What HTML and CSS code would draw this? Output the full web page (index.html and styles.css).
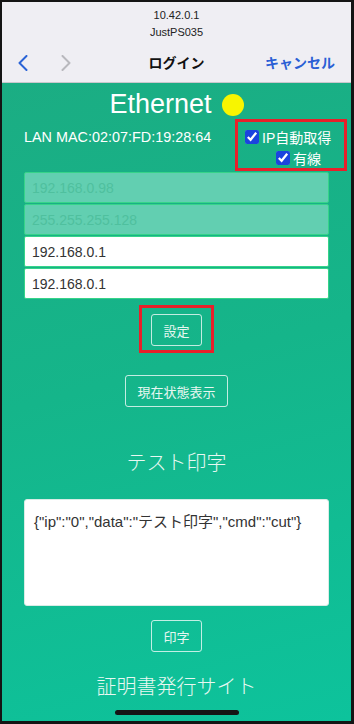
FILE: index.html
```html
<!DOCTYPE html>
<html>
<head>
<meta charset="utf-8">
<link rel="stylesheet" href="styles.css">
</head>
<body>

<div class="phone">
    <header class="browser-bar">
        <div class="site">
            <div>10.42.0.1</div>
            <div>JustPS035</div>
        </div>
        <nav class="nav">
            <div class="nav-arrows">
                <svg class="back" width="10" height="16" viewBox="0 0 10 16"><path d="M8.5 1 L1.5 8 L8.5 15" fill="none" stroke="#2a63d6" stroke-width="2" stroke-linecap="round" stroke-linejoin="round"/></svg>
                <svg class="fwd" width="10" height="16" viewBox="0 0 10 16"><path d="M1.5 1 L8.5 8 L1.5 15" fill="none" stroke="#b8b8bd" stroke-width="2" stroke-linecap="round" stroke-linejoin="round"/></svg>
            </div>
            <span class="nav-title">ログイン</span>
            <span class="nav-cancel">キャンセル</span>
        </nav>
    </header>

    <main class="page">
        <h1 class="title">Ethernet <span class="status-dot"></span></h1>

        <div class="mac-row">
            <div class="mac">LAN MAC:02:07:FD:19:28:64</div>
            <div class="checks mark">
                <label class="check"><input type="checkbox" checked>IP自動取得</label>
                <label class="check wired"><input type="checkbox" checked>有線</label>
            </div>
        </div>

        <div class="fields">
            <input class="field" type="text" value="192.168.0.98" disabled>
            <input class="field" type="text" value="255.255.255.128" disabled>
            <input class="field" type="text" value="192.168.0.1">
            <input class="field" type="text" value="192.168.0.1">
        </div>

        <div class="mark set-mark">
            <button class="btn">設定</button>
        </div>

        <button class="btn status-btn">現在状態表示</button>

        <h2 class="section test-title">テスト印字</h2>

        <textarea class="payload">{"ip":"0","data":"テスト印字","cmd":"cut"}</textarea>

        <button class="btn print-btn">印字</button>

        <h2 class="section cert-title">証明書発行サイト</h2>
    </main>

    <div class="home-bar"></div>
</div>

</body>
</html>
```

FILE: styles.css
```css
* {
    box-sizing: border-box;
}

body {
    margin: 0;
    background: #111;
    font-family: "Liberation Sans", "Noto Sans CJK JP", sans-serif;
}

.phone {
    position: relative;
    width: 354px;
    height: 724px;
    border: solid #141414;
    border-width: 2px 3px 3px 2px;
    overflow: hidden;
    display: flex;
    flex-direction: column;
    background: #efeef3;
}

/* browser chrome */
.browser-bar {
    background: #efeef3;
    border-bottom: 1px solid #c9c8cd;
    height: 81px;
    flex: none;
}

.site {
    padding-top: 5px;
    height: 40px;
    text-align: center;
    font-size: 11px;
    line-height: 17px;
    color: #222;
}

.nav {
    display: grid;
    grid-template-columns: 1fr auto 1fr;
    align-items: center;
    height: 40px;
    padding: 0 16px;
}

.nav-arrows {
    display: flex;
    gap: 33px;
    align-items: center;
    padding-top: 2px;
}

.nav-arrows svg {
    display: block;
}

.nav-title {
    font-size: 14px;
    font-weight: bold;
    color: #111;
}

.nav-cancel {
    justify-self: end;
    font-size: 14px;
    font-weight: bold;
    color: #2a5fd5;
}

/* page */
.page {
    flex: 1;
    display: flex;
    flex-direction: column;
    align-items: center;
    padding: 6px 22px 0;
    background: linear-gradient(165deg, #1bad83 0%, #15b58a 45%, #0dc39c 100%);
    color: #fff;
}

.title {
    margin: 0;
    height: 30px;
    line-height: 30px;
    font-size: 27px;
    font-weight: normal;
    display: flex;
    align-items: center;
    gap: 10px;
}

.status-dot {
    width: 22px;
    height: 22px;
    border-radius: 50%;
    background: #f8f500;
    margin-top: 2px;
}

.mac-row {
    width: 100%;
    display: flex;
    justify-content: space-between;
    align-items: flex-start;
}

.mac {
    font-size: 14.4px;
    line-height: 20px;
    padding-top: 8px;
}

.mark {
    border: 3px solid #e8202a;
}

.checks {
    width: 112px;
    height: 52px;
    margin-right: -18px;
    padding: 5px 0 0 7px;
    display: flex;
    flex-direction: column;
    gap: 1px;
}

.check {
    display: flex;
    align-items: center;
    height: 20px;
    font-size: 14px;
    gap: 3px;
}

.check input {
    margin: 0;
    width: 14px;
    height: 14px;
    accent-color: #1b44de;
}

.check.wired {
    margin-left: 31px;
}

.fields {
    width: 100%;
    margin-top: 1px;
    display: flex;
    flex-direction: column;
    gap: 1px;
}

.field {
    width: 100%;
    height: 31px;
    border: 1px solid #36d489;
    border-radius: 2px;
    padding: 0 7px;
    font-family: "Liberation Sans", sans-serif;
    font-size: 14px;
    color: #333;
    background: #fff;
}

.field:disabled {
    background: #62cfb1;
    color: #4fc09e;
}

.set-mark {
    margin-top: 6px;
    padding: 6px 9px 4px;
}

.btn {
    height: 32px;
    padding: 0 11px;
    border: 1px solid rgba(255, 255, 255, 0.75);
    border-radius: 3px;
    background: transparent;
    color: #e6f7f1;
    font-family: "Liberation Sans", "Noto Sans CJK JP", sans-serif;
    font-size: 13px;
    display: block;
}

.status-btn {
    margin-top: 22px;
}

.section {
    margin: 0;
    height: 28px;
    line-height: 28px;
    font-size: 20px;
    font-weight: 300;
    color: #e8f8f2;
}

.test-title {
    margin-top: 42px;
}

.payload {
    width: 100%;
    height: 107px;
    margin-top: 22px;
    border: 1px solid #d8ece6;
    border-radius: 3px;
    padding: 13px 9px;
    font-family: "Liberation Sans", "Noto Sans CJK JP", sans-serif;
    font-size: 15px;
    line-height: 18px;
    color: #333;
    background: #fff;
    resize: none;
}

.print-btn {
    margin-top: 14px;
}

.cert-title {
    margin-top: 21px;
}

.home-bar {
    position: absolute;
    left: 113px;
    bottom: 6px;
    width: 124px;
    height: 5px;
    border-radius: 3px;
    background: #151515;
}
```
